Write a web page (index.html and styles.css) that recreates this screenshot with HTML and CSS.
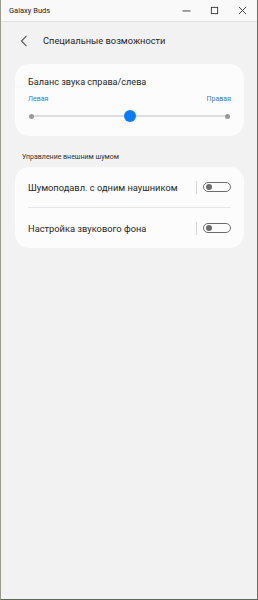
FILE: index.html
```html
<!DOCTYPE html>
<html lang="ru">
<head>
<meta charset="utf-8">
<title>Galaxy Buds</title>
<link rel="stylesheet" href="styles.css">
</head>
<body>
<div class="window">
  <div class="titlebar">
    <span class="app-name">Galaxy Buds</span>
    <div class="controls">
      <svg class="ctl" width="10" height="10" viewBox="0 0 10 10"><path d="M0.5 5.5h9" stroke="#333" stroke-width="1"/></svg>
      <svg class="ctl" width="10" height="10" viewBox="0 0 10 10"><rect x="1.5" y="1.5" width="7" height="7" fill="none" stroke="#333" stroke-width="1"/></svg>
      <svg class="ctl" width="10" height="10" viewBox="0 0 10 10"><path d="M1 1l8 8M9 1l-8 8" stroke="#333" stroke-width="1"/></svg>
    </div>
  </div>
  <div class="header">
    <svg class="back" width="8" height="12" viewBox="0 0 8 12"><path d="M6.5 0.8L1.5 6l5 5.2" fill="none" stroke="#555" stroke-width="1.1"/></svg>
    <span class="page-title">Специальные возможности</span>
  </div>
  <div class="card balance">
    <div class="card-title">Баланс звука справа/слева</div>
    <div class="lr">
      <span>Левая</span>
      <span>Правая</span>
    </div>
    <div class="slider">
      <span class="dot"></span>
      <span class="track"></span>
      <span class="thumb"></span>
      <span class="dot"></span>
    </div>
  </div>
  <div class="section-label">Управление внешним шумом</div>
  <div class="card list">
    <div class="row">
      <span class="row-text">Шумоподавл. с одним наушником</span>
      <span class="sep"></span>
      <span class="toggle"><span class="knob"></span></span>
    </div>
    <div class="divider"></div>
    <div class="row">
      <span class="row-text">Настройка звукового фона</span>
      <span class="sep"></span>
      <span class="toggle"><span class="knob"></span></span>
    </div>
  </div>
</div>
</body>
</html>
```
FILE: styles.css
```css
html, body {
  margin: 0;
  padding: 0;
  height: 100%;
}
body {
  font-family: Roboto, "Noto Sans", sans-serif;
  background: #f2f2f2;
  color: #1e1e1e;
}
.window {
  box-sizing: border-box;
  height: 600px;
  background: #f2f2f2;
  border-left: 1px solid #9a9a8e;
  border-right: 1px solid #6c6c64;
  border-bottom: 1px solid #5d6a58;
}
.titlebar {
  height: 22px;
  box-sizing: border-box;
  background: #f9f9f9;
  border-bottom: 1px solid #e2e2e2;
  display: flex;
  align-items: center;
  justify-content: space-between;
  padding-left: 8px;
}
.app-name {
  font-size: 7.5px;
  color: #222;
}
.controls {
  display: flex;
  align-items: center;
  gap: 19px;
  padding-right: 10px;
}
.ctl {
  display: block;
  width: 9px;
  height: 9px;
}
.header {
  height: 38px;
  display: flex;
  align-items: center;
  padding-left: 19px;
  padding-bottom: 1px;
  box-sizing: border-box;
}
.back {
  display: block;
  margin-right: 15px;
}
.page-title {
  font-size: 9.3px;
  color: #262626;
}
.card {
  background: #fcfcfc;
  border-radius: 14px;
  margin: 0 13px 0 14px;
}
.balance {
  margin-top: 4px;
  padding: 11px 13px 10px 13px;
  height: 72px;
  box-sizing: border-box;
}
.card-title {
  font-size: 9.1px;
  color: #262626;
  line-height: 14px;
}
.lr {
  display: flex;
  justify-content: space-between;
  font-size: 7px;
  color: #3580cc;
  margin-top: 5px;
  line-height: 10px;
}
.slider {
  position: relative;
  height: 14px;
  margin-top: 5px;
  display: flex;
  align-items: center;
  padding: 0 1px;
}
.dot {
  width: 5px;
  height: 5px;
  border-radius: 50%;
  background: #999;
  flex: none;
  position: relative;
  z-index: 1;
}
.track {
  flex: 1;
  height: 2px;
  background: #ddd;
  margin: 0 -2px;
}
.thumb {
  position: absolute;
  left: 50%;
  top: 50%;
  width: 12px;
  height: 12px;
  margin: -6px 0 0 -6px;
  border-radius: 50%;
  background: #0b7cf5;
  z-index: 2;
}
.section-label {
  font-size: 7px;
  color: #333;
  padding: 16px 0 0 21px;
  line-height: 10px;
  height: 22px;
  box-sizing: border-box;
}
.list {
  margin-top: 9px;
  padding: 0 13px;
}
.row {
  height: 40px;
  display: flex;
  align-items: center;
}
.row-text {
  flex: 1;
  font-size: 9.3px;
  color: #262626;
}
.sep {
  width: 1px;
  height: 13px;
  background: #d8d8d8;
  margin-right: 6px;
}
.toggle {
  position: relative;
  width: 28px;
  height: 10px;
  box-sizing: border-box;
  border: 1px solid #6d6d6d;
  border-radius: 6px;
  display: flex;
  align-items: center;
  padding-left: 2px;
}
.knob {
  width: 6px;
  height: 6px;
  border-radius: 50%;
  background: #6d6d6d;
}
.divider {
  height: 1px;
  background: #e8e8e8;
}
```
